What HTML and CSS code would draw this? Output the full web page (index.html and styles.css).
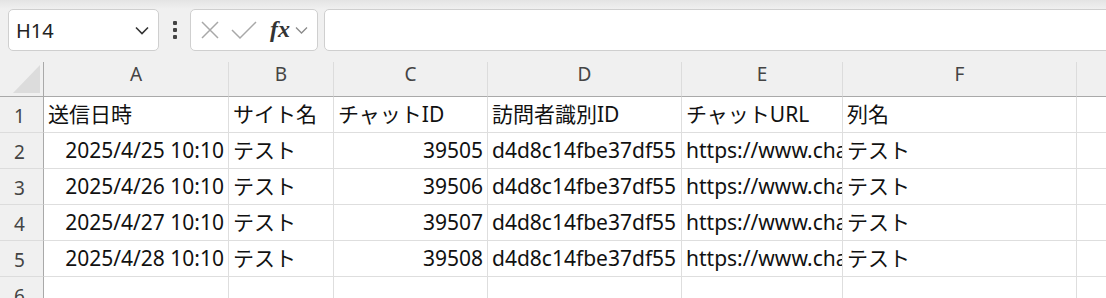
FILE: index.html
```html
<!DOCTYPE html>
<html lang="ja">
<head>
<meta charset="utf-8">
<title>Sheet</title>
<link rel="stylesheet" href="styles.css">
</head>
<body>
<div class="toolbar">
  <div class="namebox">
    <span class="name">H14</span>
    <svg class="chev" width="14" height="9" viewBox="0 0 14 9"><path d="M1 1.5 L7 7.5 L13 1.5" fill="none" stroke="#333" stroke-width="1.6"/></svg>
  </div>
  <div class="dots"><i></i><i></i><i></i></div>
  <div class="fxbox">
    <svg class="ico" width="20" height="20" viewBox="0 0 20 20"><path d="M2 2 L18 18 M18 2 L2 18" stroke="#a8a8a8" stroke-width="1.5" fill="none"/></svg>
    <svg class="ico" width="26" height="20" viewBox="0 0 26 20"><path d="M1 10 L9 18 L25 2" stroke="#a8a8a8" stroke-width="1.5" fill="none"/></svg>
    <span class="fx">fx</span>
    <svg class="chev2" width="13" height="8" viewBox="0 0 13 8"><path d="M1 1.5 L6.5 7 L12 1.5" fill="none" stroke="#8a8a8a" stroke-width="1.3"/></svg>
  </div>
  <div class="formula"></div>
</div>
<div class="sheet">
  <div class="hd corner"><span class="tri"></span></div>
  <div class="hd col">A</div>
  <div class="hd col">B</div>
  <div class="hd col">C</div>
  <div class="hd col">D</div>
  <div class="hd col">E</div>
  <div class="hd col">F</div>
  <div class="hd col last"></div>

  <div class="rn">1</div>
  <div class="c">送信日時</div>
  <div class="c">サイト名</div>
  <div class="c">チャットID</div>
  <div class="c">訪問者識別ID</div>
  <div class="c">チャットURL</div>
  <div class="c">列名</div>
  <div class="c last"></div>

  <div class="rn">2</div>
  <div class="c r">2025/4/25 10:10</div>
  <div class="c">テスト</div>
  <div class="c r">39505</div>
  <div class="c">d4d8c14fbe37df55</div>
  <div class="c">https://www.chat.example</div>
  <div class="c">テスト</div>
  <div class="c last"></div>

  <div class="rn">3</div>
  <div class="c r">2025/4/26 10:10</div>
  <div class="c">テスト</div>
  <div class="c r">39506</div>
  <div class="c">d4d8c14fbe37df55</div>
  <div class="c">https://www.chat.example</div>
  <div class="c">テスト</div>
  <div class="c last"></div>

  <div class="rn">4</div>
  <div class="c r">2025/4/27 10:10</div>
  <div class="c">テスト</div>
  <div class="c r">39507</div>
  <div class="c">d4d8c14fbe37df55</div>
  <div class="c">https://www.chat.example</div>
  <div class="c">テスト</div>
  <div class="c last"></div>

  <div class="rn">5</div>
  <div class="c r">2025/4/28 10:10</div>
  <div class="c">テスト</div>
  <div class="c r">39508</div>
  <div class="c">d4d8c14fbe37df55</div>
  <div class="c">https://www.chat.example</div>
  <div class="c">テスト</div>
  <div class="c last"></div>

  <div class="rn">6</div>
  <div class="c"></div>
  <div class="c"></div>
  <div class="c"></div>
  <div class="c"></div>
  <div class="c"></div>
  <div class="c"></div>
  <div class="c last"></div>
</div>
</body>
</html>
```
FILE: styles.css
```css
html, body {
  margin: 0;
  padding: 0;
  width: 1106px;
  height: 298px;
  overflow: hidden;
  background: #f0f0f0;
  font-family: "Noto Sans", "Noto Sans CJK JP", sans-serif;
}
.toolbar {
  height: 62px;
  box-sizing: border-box;
  padding: 9px 0 0 8px;
  display: flex;
  align-items: flex-start;
  background: linear-gradient(#e4e4e4 0px, #f0f0f0 9px);
}
.namebox {
  width: 151px;
  height: 42px;
  box-sizing: border-box;
  background: #fff;
  border: 1px solid #cfcfcf;
  border-radius: 5px;
  display: flex;
  align-items: center;
  justify-content: space-between;
  padding: 0 9px 0 7px;
}
.name {
  font-family: "Noto Sans", sans-serif;
  font-size: 20px;
  color: #222;
}
.dots {
  width: 31px;
  height: 42px;
  display: flex;
  flex-direction: column;
  align-items: center;
  justify-content: center;
  gap: 3px;
}
.dots i {
  display: block;
  width: 4px;
  height: 4px;
  border-radius: 1px;
  background: #444;
}
.fxbox {
  width: 128px;
  height: 42px;
  box-sizing: border-box;
  background: #fff;
  border: 1px solid #cfcfcf;
  border-radius: 5px;
  display: flex;
  align-items: center;
  padding: 0 4px 0 9px;
  gap: 11px;
}
.fx {
  font-family: "Liberation Serif", serif;
  font-style: italic;
  font-weight: bold;
  font-size: 24px;
  color: #333;
  margin-left: 2px;
  line-height: 1;
  margin-top: -3px;
}
.chev2 { margin-left: -6px; }
.formula {
  flex: 1;
  height: 42px;
  margin-left: 6px;
  margin-right: -10px;
  box-sizing: border-box;
  background: #fff;
  border: 1px solid #cfcfcf;
  border-radius: 5px;
}
.sheet {
  display: grid;
  grid-template-columns: 44px 185px 105px 154px 194px 161px 234px 30px;
  grid-template-rows: 35px repeat(6, 36px);
  background: #fff;
}
.hd {
  background: #f0f0f0;
  border-bottom: 1px solid #a9a9a9;
  border-right: 1px solid #dcdcdc;
  font-family: "Noto Sans", sans-serif;
  font-size: 19px;
  color: #444;
  text-align: center;
  line-height: 24px;
  box-sizing: border-box;
  height: 35px;
}
.hd.col { line-height: 25px; }
.hd.corner {
  border-right: 1px solid #a9a9a9;
  position: relative;
}
.tri {
  position: absolute;
  left: 13px;
  top: 3px;
  width: 0;
  height: 0;
  border-left: 27px solid transparent;
  border-bottom: 28px solid #dcdcdc;
}
.hd.last { border-right: none; }
.rn {
  background: #f0f0f0;
  border-right: 1px solid #a9a9a9;
  border-bottom: 1px solid #dcdcdc;
  font-family: "Noto Sans", sans-serif;
  font-size: 19px;
  color: #444;
  text-align: center;
  line-height: 38px;
  padding-right: 4px;
  box-sizing: border-box;
}
.c {
  border-right: 1px solid #dedede;
  border-bottom: 1px solid #dedede;
  box-sizing: border-box;
  font-size: 21px;
  line-height: 35px;
  color: #111;
  padding: 0 4px;
  white-space: nowrap;
  overflow: hidden;
}
.c.r { text-align: right; }
.c.last { border-right: none; }
```
